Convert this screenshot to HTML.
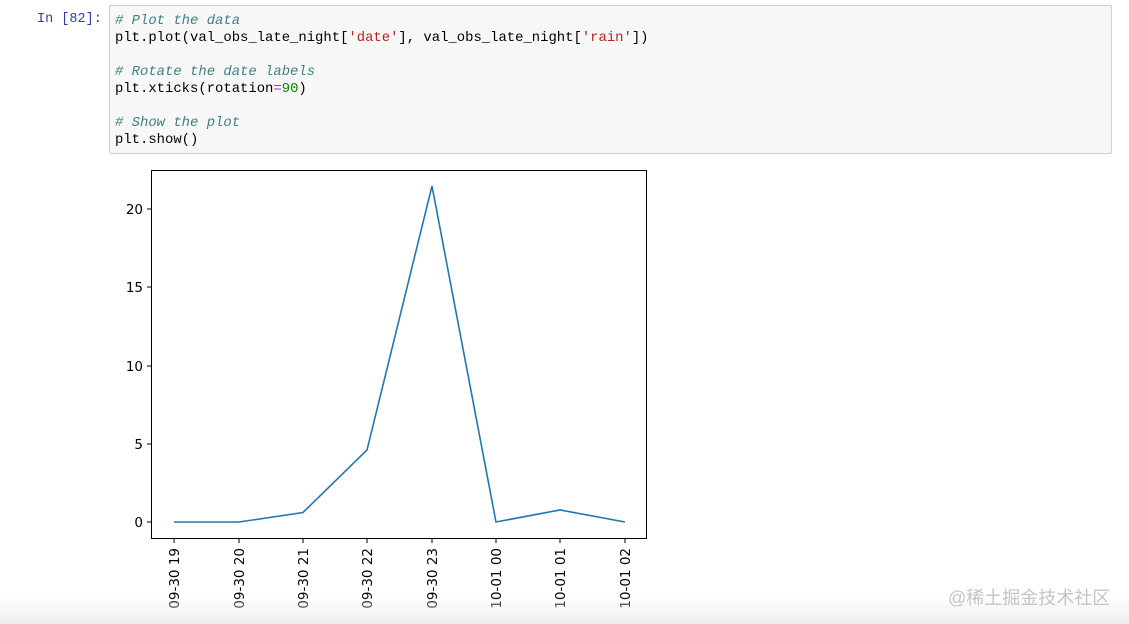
<!DOCTYPE html>
<html><head><meta charset="utf-8"><style>
html,body{margin:0;padding:0;background:#fff;width:1129px;height:624px;overflow:hidden;position:relative}
.prompt{position:absolute;left:37px;top:12px;font:13.5px "Liberation Mono",monospace;color:#303f9f}
.code{position:absolute;left:109px;top:5px;width:1001px;height:147px;background:#f7f7f7;border:1px solid #cfcfcf;border-radius:2px}
.code pre{margin:0;position:absolute;left:5px;top:7px;font:13.9px/17px "Liberation Mono",monospace;color:#000}
.c{color:#408080;font-style:italic}.s{color:#ba2121}.o{color:#aa22ff}.n{color:#080}
.fade{position:absolute;left:0;top:596px;width:1129px;height:28px;background:linear-gradient(#ffffff00,#eeeeee)}
.wm{position:absolute;left:948px;top:584px;font:18px "Liberation Sans","Noto Sans CJK SC",sans-serif;color:#c4c4c4}
</style></head><body>
<div class="prompt">In [82]:</div>
<div class="code"><pre><span class="c"># Plot the data</span>
plt.plot(val_obs_late_night[<span class="s">'date'</span>], val_obs_late_night[<span class="s">'rain'</span>])

<span class="c"># Rotate the date labels</span>
plt.xticks(rotation<span class="o">=</span><span class="n">90</span>)

<span class="c"># Show the plot</span>
plt.show()</pre></div>
<svg width="1129" height="624" style="position:absolute;left:0;top:0" font-family="DejaVu Sans, Liberation Sans, sans-serif" font-size="13.5">
<rect x="151.5" y="170.5" width="495" height="368" fill="none" stroke="#000" stroke-width="1"/>
<g stroke="#000">
<line x1="147" x2="151.5" y1="522" y2="522"/><line x1="147" x2="151.5" y1="444" y2="444"/><line x1="147" x2="151.5" y1="366" y2="366"/><line x1="147" x2="151.5" y1="287" y2="287"/><line x1="147" x2="151.5" y1="209" y2="209"/>
<line x1="174" x2="174" y1="539" y2="543"/><line x1="239" x2="239" y1="539" y2="543"/><line x1="303" x2="303" y1="539" y2="543"/><line x1="367" x2="367" y1="539" y2="543"/><line x1="432" x2="432" y1="539" y2="543"/><line x1="496" x2="496" y1="539" y2="543"/><line x1="560" x2="560" y1="539" y2="543"/><line x1="625" x2="625" y1="539" y2="543"/>
</g>
<g text-anchor="end" fill="#000">
<text x="143" y="527">0</text><text x="143" y="449">5</text><text x="143" y="371">10</text><text x="143" y="292">15</text><text x="143" y="214">20</text>
</g>
<g text-anchor="end" fill="#000">
<text transform="translate(179,548) rotate(-90)">09-30 19</text>
<text transform="translate(244,548) rotate(-90)">09-30 20</text>
<text transform="translate(308,548) rotate(-90)">09-30 21</text>
<text transform="translate(372,548) rotate(-90)">09-30 22</text>
<text transform="translate(437,548) rotate(-90)">09-30 23</text>
<text transform="translate(501,548) rotate(-90)">10-01 00</text>
<text transform="translate(565,548) rotate(-90)">10-01 01</text>
<text transform="translate(630,548) rotate(-90)">10-01 02</text>
</g>
<polyline fill="none" stroke="#1f77b4" stroke-width="1.6" points="174,522 239,522 303,512.5 367,450 432,186 496,522 560,510 625,522"/>
</svg>
<div class="fade"></div>
<div class="wm">@稀土掘金技术社区</div>
</body></html>
